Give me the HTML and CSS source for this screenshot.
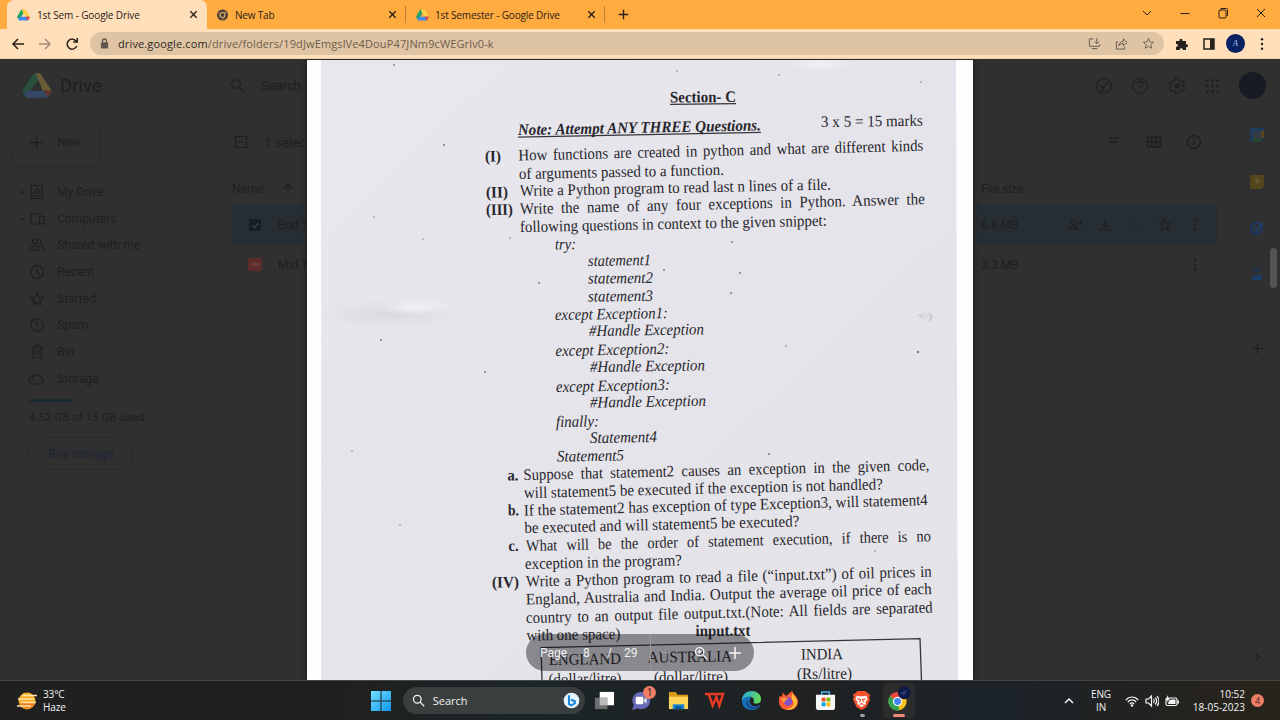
FILE: index.html
```html
<!DOCTYPE html>
<html lang="en">
<head>
<meta charset="utf-8">
<title>1st Sem - Google Drive</title>
<link rel="stylesheet" href="styles.css">
</head>
<body>
<svg class="defs" aria-hidden="true">
  <symbol id="drive" viewBox="0 0 24 22"><path fill="#1fa463" d="M8 1h4l2 3L4 21 0 14z"/><path fill="#ffcf48" d="M8 1h8l8 13h-8z"/><path fill="#4688f4" d="M8 14h16l-4 7H4L2 17z"/><path fill="#ea4335" d="M16 14h8l-4 7z"/></symbol>
  <symbol id="drivebig" viewBox="0 0 24 22"><path fill="#1fa463" d="M9.500 1H12l1.500 5-7 9L2 20l-2-5z"/><path fill="#ffcf48" d="M11 1h3.500L24 15l-7 1z"/><path fill="#4688f4" d="M5 15h14l2 6H4l-3-3z"/><path fill="#ea4335" d="M17 15h7l-3 6z"/><path fill="#303030" d="M12 8.500L7.500 15.500h9z"/></symbol>
  <symbol id="x" viewBox="0 0 10 10"><path class="ln" d="M1.5 1.5l7 7M8.500 1.500l-7 7"/></symbol>
  <symbol id="plus" viewBox="0 0 14 14"><path class="ln" d="M7 1v12M1 7h12"/></symbol>
  <symbol id="star" viewBox="0 0 16 16"><path class="ln" d="M8 1.800l1.800 4.200 4.500.4-3.400 3 1 4.400L8 11.500l-3.900 2.300 1-4.400-3.400-3 4.500-.4z"/></symbol>
  <symbol id="dots" viewBox="0 0 14 14"><g fill="currentColor"><circle cx="7" cy="2.300" r="1.200"/><circle cx="7" cy="7" r="1.200"/><circle cx="7" cy="11.700" r="1.200"/></g></symbol>
  <symbol id="lens" viewBox="0 0 16 16"><circle class="ln" cx="6.500" cy="6.500" r="4.700"/><path class="ln" d="M10 10l5 5"/></symbol>
</svg>

<header class="tabs">
  <div class="tab active"><svg class="fav"><use href="#drive"/></svg><span class="t1">1st Sem - Google Drive</span><svg class="close"><use href="#x"/></svg></div>
  <div class="tab second"><svg class="fav" viewBox="0 0 14 14"><circle cx="7" cy="7" r="6.500" fill="#4b4038"/><circle cx="7" cy="7" r="2.900" fill="#4b4038" stroke="#e9b875" stroke-width="1.200"/><path d="M7 4h6M4.500 8.500l-3-5M9.500 8.500l-3 5" stroke="#c99554" stroke-width=".8"/></svg><span class="t2">New Tab</span><svg class="close"><use href="#x"/></svg></div>
  <div class="tab third"><svg class="fav"><use href="#drive"/></svg><span class="t3">1st Semester - Google Drive</span><svg class="close"><use href="#x"/></svg></div>
  <svg class="newtab"><use href="#plus"/></svg>
  <div class="wins">
    <svg viewBox="0 0 12 12"><path class="ln" d="M2 4l4 4 4-4"/></svg>
    <svg viewBox="0 0 12 12"><path class="ln" d="M1.500 6.500h9"/></svg>
    <svg viewBox="0 0 12 12"><rect class="ln" x="2" y="3" width="7" height="8" rx="1"/><path class="ln" d="M4 3V1.500h5.500q1 0 1 1V9"/></svg>
    <svg viewBox="0 0 12 12"><path class="ln" d="M2 2l8 8M10 2l-8 8"/></svg>
  </div>
</header>

<div class="toolbar">
  <svg class="nav" viewBox="0 0 14 14"><path class="ln" d="M13 7H2M7 2L2 7l5 5"/></svg>
  <svg class="nav faded" viewBox="0 0 14 14"><path class="ln" d="M1 7h11M7 2l5 5-5 5"/></svg>
  <svg class="nav" viewBox="0 0 14 14"><path class="ln" d="M11.800 9A5 5 0 1 1 11.300 4.300M12.300 1v4H8.300"/></svg>
  <div class="omni">
    <svg class="lock" viewBox="0 0 10 12"><path class="ln" d="M2.800 5V3.200a2.200 2.200 0 0 1 4.400 0V5"/><rect x="1" y="4.500" width="8" height="7" rx="1" fill="currentColor"/></svg>
    <span class="url"><b>drive.google.com</b>/drive/folders/19dJwEmgslVe4DouP47JNm9cWEGrlv0-k</span>
    <svg viewBox="0 0 14 14"><path class="ln" d="M6 2H1.500v8h11V8M4 12.500h6M9.500 1v6M7 4.800l2.500 2.500L12 4.800"/></svg>
    <svg viewBox="0 0 14 14"><path class="ln" d="M3 5H1.500v8h9v-2.500M4 9.500C4.500 6 6.500 4.500 9 4.500V2l4 4-4 3.500V7C7 7 5.200 7.500 4 9.500z"/></svg>
    <svg><use href="#star"/></svg>
  </div>
  <svg class="ext" viewBox="0 0 14 14"><path fill="currentColor" d="M1 4h3.500C4 1 8 1 7.500 4H11v3.200c2.800-.5 2.800 3.500 0 3V13H7.800c.3-2.500-3.200-2.500-3 0H1V9.800c2.500 0 2.500-2.800 0-2.800z"/></svg>
  <svg class="ext" viewBox="0 0 14 14"><rect x="2" y="2" width="10" height="10" fill="none" stroke="currentColor" stroke-width="1.500"/><path fill="currentColor" d="M8 2h4v10H8z"/></svg>
  <span class="ava"><i>A</i></span>
  <svg class="ext"><use href="#dots"/></svg>
</div>

<main class="stage">
  <div class="drive">
    <aside class="side">
      <div class="brand"><svg><use href="#drivebig"/></svg><span>Drive</span></div>
      <div class="new"><svg><use href="#plus"/></svg><span>New</span></div>
      <ul class="menu">
        <li><em>▸</em><svg viewBox="0 0 16 16"><path class="ln" d="M2.500 1.500h11v13h-11zM2.500 12h11M8 4L5 9h6z"/></svg>My Drive</li>
        <li><em>▸</em><svg viewBox="0 0 16 16"><path class="ln" d="M0 13h9M2 12V3h12M10.500 5.500h4.700V13h-4.700z"/></svg>Computers</li>
        <li><em></em><svg viewBox="0 0 16 16"><circle class="ln" cx="6" cy="4.500" r="2.500"/><path class="ln" d="M1 13c0-5 10-5 10 0zM10 2c3 0 3 5 0 5M12 9c2 .5 3 2 3 4h-2"/></svg>Shared with me</li>
        <li><em></em><svg viewBox="0 0 16 16"><circle class="ln" cx="8" cy="8" r="6.300"/><path class="ln" d="M8 4v4l3 2"/></svg>Recent</li>
        <li><em></em><svg><use href="#star"/></svg>Starred</li>
        <li><em></em><svg viewBox="0 0 16 16"><circle class="ln" cx="8" cy="8" r="6.300"/><path class="ln" d="M8 4v5M8 10.500V12"/></svg>Spam</li>
        <li><em></em><svg viewBox="0 0 16 16"><path class="ln" d="M2 3h12M4 3v11h8V3M6 1.500h4M6.500 5.500v6M9.500 5.500v6"/></svg>Bin</li>
        <li><em></em><svg viewBox="0 0 16 16"><path class="ln" d="M4 13a3.400 3.400 0 0 1-.3-6.800 4.500 4.500 0 0 1 8.500 1A3 3 0 0 1 12.500 13z"/></svg>Storage</li>
      </ul>
      <div class="bar"><div></div></div>
      <div class="used">4.52 GB of 15 GB used</div>
      <div class="buy">Buy storage</div>
    </aside>
    <section class="files">
      <div class="top">
        <div class="search"><svg><use href="#lens"/></svg><span>Search</span></div>
        <div class="acts">
          <svg viewBox="0 0 18 18"><circle class="ln" cx="9" cy="9" r="7.500"/><path class="ln" d="M5 8l3 3 5-6M6 13h6"/></svg>
          <svg viewBox="0 0 18 18"><circle class="ln" cx="9" cy="9" r="7.500"/><path class="ln" d="M6.500 7c0-3.300 5-3.300 5 0 0 2-2.500 2-2.500 4M9 12.500V14"/></svg>
          <svg viewBox="0 0 18 18"><path class="ln" d="M7.500 1.500h3l.5 2.300 2 1 2.200-.7 1.500 2.600L15 8.500v1l1.700 1.800-1.500 2.600-2.200-.7-2 1-.5 2.300h-3L7 14.200l-2-1-2.200.7-1.500-2.600L3 9.500v-1L1.300 6.700l1.500-2.600 2.200.7 2-1z"/><circle cx="9" cy="9" r="2.500" fill="currentColor"/></svg>
          <svg class="grid" viewBox="0 0 18 18"><path d="M3 3.500h13M3 9h13M3 14.500h13" stroke="currentColor" stroke-width="2.600" stroke-dasharray="2.600 2.600"/></svg>
          <span class="me"></span>
        </div>
      </div>
      <div class="sel"><svg viewBox="0 0 14 14"><path class="ln" d="M1.500 1.500h11v11h-11zM4 7h6"/></svg><span>1 selected</span>
        <div class="view">
          <svg viewBox="0 0 16 16"><path class="ln" d="M2 4h12M4 8h8M7 12h2"/></svg>
          <svg viewBox="0 0 16 16"><path class="ln" d="M1.500 3h13v10h-13zM1.500 8h13M5.800 3v10M10.200 3v10"/></svg>
          <svg viewBox="0 0 16 16"><circle class="ln" cx="8" cy="8" r="6.500"/><path class="ln" d="M8 7v5M8 4v1.500"/></svg>
        </div>
      </div>
      <div class="head"><span>Name</span><svg viewBox="0 0 12 12"><path class="ln" d="M6 11V1.500M2 5.500l4-4 4 4"/></svg><span class="size">File size</span></div>
      <div class="row on"><svg class="kind" viewBox="0 0 14 14"><rect x="1" y="1" width="12" height="12" rx="1" fill="#171e24"/><path d="M4 7l2.500 2.500L10.500 5" fill="none" stroke="#354049" stroke-width="1.400"/></svg><span>End Term</span><span class="size">6.8 MB</span>
        <div class="tools">
          <svg viewBox="0 0 16 16"><circle class="ln" cx="6" cy="5" r="2.500"/><path class="ln" d="M1 13c0-5 10-5 10 0zM14 3.500v5M11.500 6h5"/></svg>
          <svg viewBox="0 0 16 16"><path class="ln" d="M8 2v8M4.500 7L8 10.500 11.500 7M2.500 11v3h11v-3"/></svg>
          <svg class="off" viewBox="0 0 16 16"><path class="ln" d="M8 3L3 12h10z"/></svg>
          <svg><use href="#star"/></svg><svg><use href="#dots"/></svg>
        </div>
      </div>
      <div class="row"><svg class="kind" viewBox="0 0 14 14"><rect width="14" height="13" rx="1" fill="#5c2b2a"/><path d="M3 5h8v3H3z" fill="#6a3b3a"/></svg><span>Mid Term</span><span class="size">3.3 MB</span><div class="tools"><svg><use href="#dots"/></svg></div></div>
    </section>
    <aside class="rail">
      <svg viewBox="0 0 16 16"><path d="M1 1h14v10l-4 4H1z" fill="#1f3a5b"/><path d="M4 4h8v8H4z" fill="#343c46"/><path d="M12 4h3v7h-3z" fill="#5b4820"/><path d="M4 12h8v3H4z" fill="#24462f"/></svg>
      <svg viewBox="0 0 16 16"><path d="M1 1h14v11l-3 3H1z" fill="#54451c"/><circle cx="8" cy="7" r="2.500" fill="#66562f"/></svg>
      <svg viewBox="0 0 16 16"><circle cx="7.500" cy="8.500" r="5.500" fill="none" stroke="#20365f" stroke-width="2.300"/><path d="M5 8l2.500 2.500L14 3" fill="none" stroke="#253e70" stroke-width="2"/></svg>
      <svg class="who" viewBox="0 0 16 16"><circle cx="8" cy="4" r="2.800" fill="#20344c"/><path d="M3 14v-3q0-2 2-2h6q2 0 2 2v3z" fill="#1d3d64"/></svg>
      <hr>
      <svg class="add"><use href="#plus"/></svg>
      <svg class="chev" viewBox="0 0 12 12"><path class="ln" d="M4 2l4 4-4 4"/></svg>
    </aside>
  </div>

  <div class="paper">
    <svg class="scan" viewBox="307 60 666 620">
      <defs>
        <linearGradient id="pg" x1="0" x2="1" y1="0" y2="1"><stop offset="0" stop-color="#e8e7ed"/><stop offset=".5" stop-color="#e5e4ea"/><stop offset="1" stop-color="#e4e3e8"/></linearGradient>
        <radialGradient id="sh"><stop offset="0" stop-color="#cfced5" stop-opacity=".5"/><stop offset="1" stop-color="#cfced5" stop-opacity="0"/></radialGradient>
        <radialGradient id="hi"><stop offset="0" stop-color="#fafaff" stop-opacity=".6"/><stop offset="1" stop-color="#fafaff" stop-opacity="0"/></radialGradient>
      </defs>
      <path d="M321 60H956L958 680H321z" fill="url(#pg)"/>
      <ellipse cx="390" cy="314" rx="70" ry="15" fill="url(#sh)"/>
      <ellipse cx="415" cy="307" rx="40" ry="8" fill="url(#hi)"/>
      <ellipse cx="820" cy="64" rx="34" ry="6" fill="url(#hi)"/>
      <ellipse cx="926" cy="316" rx="12" ry="5" fill="url(#sh)"/>
      <path d="M919 314l4 4M929 313l3 4-3 4" stroke="#b5b4bd" fill="none"/>
      <g fill="#77767f"><circle cx="394" cy="65" r=".9"/><circle cx="444" cy="145" r="1"/><circle cx="510" cy="238" r=".8"/><circle cx="677" cy="71" r=".8"/><circle cx="779" cy="75" r=".8"/><circle cx="539" cy="283" r="1"/><circle cx="664" cy="270" r="1"/><circle cx="740" cy="273" r="1"/><circle cx="731" cy="293" r="1"/><circle cx="732" cy="242" r=".9"/><circle cx="381" cy="340" r="1"/><circle cx="918" cy="352" r="1.200"/><circle cx="769" cy="454" r="1"/><circle cx="786" cy="346" r=".8"/><circle cx="485" cy="372" r=".9"/><circle cx="921" cy="82" r=".8"/><circle cx="423" cy="239" r=".7"/><circle cx="875" cy="551" r=".8"/><circle cx="374" cy="217" r=".7"/><circle cx="400" cy="525" r=".7"/><circle cx="352" cy="451" r=".7"/></g>
      <g class="ink" transform="translate(0 -.4)">
        <g transform="translate(670 103) rotate(-.6)"><text class="b" textLength="66" lengthAdjust="spacingAndGlyphs">Section- C</text><path d="M0 1.800h66"/></g>
        <g transform="translate(518 135.500) rotate(-1.100)"><text class="b i" textLength="243" lengthAdjust="spacingAndGlyphs">Note: Attempt ANY THREE Questions.</text><path d="M0 2h243"/></g>
        <text transform="translate(821 127.500) rotate(-.8)" textLength="102" lengthAdjust="spacingAndGlyphs">3 x 5 = 15 marks</text>
        <text class="b" transform="translate(485 162) rotate(-1)" textLength="16" lengthAdjust="spacingAndGlyphs">(I)</text>
        <text class="w3" transform="translate(518.500 161) rotate(-1.400)" textLength="405" lengthAdjust="spacingAndGlyphs">How functions are created in python and what are different kinds</text>
        <text transform="translate(519 179.500) rotate(-1.200)" textLength="205" lengthAdjust="spacingAndGlyphs">of arguments passed to a function.</text>
        <text class="b" transform="translate(486 198) rotate(-1)" textLength="22" lengthAdjust="spacingAndGlyphs">(II)</text>
        <text transform="translate(520 196.500) rotate(-1.200)" textLength="311" lengthAdjust="spacingAndGlyphs">Write a Python program to read last n lines of a file.</text>
        <text class="b" transform="translate(486 215.500) rotate(-1)" textLength="27" lengthAdjust="spacingAndGlyphs">(III)</text>
        <text class="w4" transform="translate(520 214.500) rotate(-1.400)" textLength="405" lengthAdjust="spacingAndGlyphs">Write the name of any four exceptions in Python. Answer the</text>
        <text transform="translate(520 232.500) rotate(-1.200)" textLength="307" lengthAdjust="spacingAndGlyphs">following questions in context to the given snippet:</text>
        <g class="i">
          <text transform="translate(555 250) rotate(-1)" textLength="21" lengthAdjust="spacingAndGlyphs">try:</text>
          <text transform="translate(588 266.500) rotate(-1)" textLength="63" lengthAdjust="spacingAndGlyphs">statement1</text>
          <text transform="translate(588 284) rotate(-.6)" textLength="65" lengthAdjust="spacingAndGlyphs">statement2</text>
          <text transform="translate(588 302) rotate(-.6)" textLength="65" lengthAdjust="spacingAndGlyphs">statement3</text>
          <text transform="translate(555 320.500) rotate(-1)" textLength="113" lengthAdjust="spacingAndGlyphs">except Exception1:</text>
          <text transform="translate(589 336.500) rotate(-.9)" textLength="115" lengthAdjust="spacingAndGlyphs">#Handle Exception</text>
          <text transform="translate(555.500 356.500) rotate(-1.200)" textLength="114" lengthAdjust="spacingAndGlyphs">except Exception2:</text>
          <text transform="translate(590 372.500) rotate(-.9)" textLength="115" lengthAdjust="spacingAndGlyphs">#Handle Exception</text>
          <text transform="translate(556 392.500) rotate(-1.200)" textLength="114" lengthAdjust="spacingAndGlyphs">except Exception3:</text>
          <text transform="translate(590 408) rotate(-.9)" textLength="116" lengthAdjust="spacingAndGlyphs">#Handle Exception</text>
          <text transform="translate(556 427.500) rotate(-1)" textLength="43" lengthAdjust="spacingAndGlyphs">finally:</text>
          <text transform="translate(590 443.500) rotate(-1)" textLength="67" lengthAdjust="spacingAndGlyphs">Statement4</text>
          <text transform="translate(557 462) rotate(-1)" textLength="67" lengthAdjust="spacingAndGlyphs">Statement5</text>
        </g>
        <g class="b">
          <text transform="translate(507.500 481) rotate(-1)" textLength="11" lengthAdjust="spacingAndGlyphs">a.</text>
          <text transform="translate(508 516) rotate(-1)" textLength="11" lengthAdjust="spacingAndGlyphs">b.</text>
          <text transform="translate(508.500 551.500) rotate(-1)" textLength="10" lengthAdjust="spacingAndGlyphs">c.</text>
          <text transform="translate(492 588) rotate(-1)" textLength="27" lengthAdjust="spacingAndGlyphs">(IV)</text>
          <text transform="translate(695.500 636.500) rotate(-.5)" textLength="55" lengthAdjust="spacingAndGlyphs">input.txt</text>
        </g>
        <text class="w4" transform="translate(523.500 480.500) rotate(-1.400)" textLength="406" lengthAdjust="spacingAndGlyphs">Suppose that statement2 causes an exception in the given code,</text>
        <text transform="translate(524 498.500) rotate(-1.400)" textLength="359" lengthAdjust="spacingAndGlyphs">will statement5 be executed if the exception is not handled?</text>
        <text transform="translate(524 516) rotate(-1.500)" textLength="404" lengthAdjust="spacingAndGlyphs">If the statement2 has exception of type Exception3, will statement4</text>
        <text transform="translate(524.500 533.500) rotate(-1.400)" textLength="275" lengthAdjust="spacingAndGlyphs">be executed and will statement5 be executed?</text>
        <text class="w5" transform="translate(526 551.500) rotate(-1.400)" textLength="405" lengthAdjust="spacingAndGlyphs">What will be the order of statement execution, if there is no</text>
        <text transform="translate(525 569.500) rotate(-1.400)" textLength="157" lengthAdjust="spacingAndGlyphs">exception in the program?</text>
        <text class="w1" transform="translate(526 587) rotate(-1.400)" textLength="406" lengthAdjust="spacingAndGlyphs">Write a Python program to read a file (“input.txt”) of oil prices in</text>
        <text class="w1" transform="translate(526 605) rotate(-1.500)" textLength="406" lengthAdjust="spacingAndGlyphs">England, Australia and India. Output the average oil price of each</text>
        <text class="w2" transform="translate(526 623.500) rotate(-1.500)" textLength="407" lengthAdjust="spacingAndGlyphs">country to an output file output.txt.(Note: All fields are separated</text>
        <text transform="translate(526.500 641) rotate(-1)" textLength="94" lengthAdjust="spacingAndGlyphs">with one space)</text>
        <path d="M542 681L541 648L920 639L921.500 681"/>
        <text transform="translate(549 665.500) rotate(-1)" textLength="72" lengthAdjust="spacingAndGlyphs">ENGLAND</text>
        <text transform="translate(648 663) rotate(-.9)" textLength="84" lengthAdjust="spacingAndGlyphs">AUSTRALIA</text>
        <text transform="translate(801 660) rotate(-.6)" textLength="42" lengthAdjust="spacingAndGlyphs">INDIA</text>
        <text transform="translate(548.500 685) rotate(-1)" textLength="73" lengthAdjust="spacingAndGlyphs">(dollar/litre)</text>
        <text transform="translate(654 683) rotate(-.8)" textLength="74" lengthAdjust="spacingAndGlyphs">(dollar/litre)</text>
        <text transform="translate(797 679.500) rotate(-.6)" textLength="55" lengthAdjust="spacingAndGlyphs">(Rs/litre)</text>
      </g>
    </svg>
  </div>
  <div class="pager"><span class="p1">Page</span><span class="p2">8</span><span class="p3">/</span><span class="p4">29</span><div class="zoomer"><i class="minus"></i><svg viewBox="0 0 16 16"><use href="#lens"/><path class="ln" d="M4.300 6.500h4.400M6.500 4.300v4.400"/></svg><svg><use href="#plus"/></svg></div></div>
  <div class="thumb"></div>
</main>

<footer class="task">
  <div class="weather"><svg viewBox="0 0 20 18"><circle cx="10" cy="9" r="8.500" fill="#f7ae25"/><path d="M2 11h16a8.500 8.500 0 0 1-16 0" fill="#ec7b1c"/><path d="M5 3.500h15M1 7h16M4 10.500h15M0 14h14" stroke="#ffe6b0" stroke-width="1.300"/></svg><div>33°C<br>Haze</div></div>
  <div class="apps">
    <svg class="win" viewBox="0 0 20 20"><defs><linearGradient id="wg" x2="1" y2="1"><stop stop-color="#75e2ff"/><stop offset="1" stop-color="#0c94f0"/></linearGradient></defs><path fill="url(#wg)" d="M0 0h9.500v9.500H0zM10.500 0H20v9.500h-9.500zM0 10.500h9.500V20H0zM10.500 10.500H20V20h-9.500z"/></svg>
    <div class="find"><svg><use href="#lens"/></svg><span>Search</span><svg class="bing" viewBox="0 0 18 18"><circle cx="9" cy="9" r="8.300" fill="#e6f4ff"/><path d="M6.300 3.500v9.300l2.500 1.400 3.800-2.300V9.800L8.300 8" fill="none" stroke="#1683dd" stroke-width="2.100"/></svg></div>
    <svg viewBox="0 0 22 22"><path fill="#fff" d="M6 2h15v14H6z"/><path fill="#777" fill-opacity=".9" d="M1 8h13v12H1z"/><path fill="#bbb" d="M6 8h8v8H6z"/></svg>
    <div class="chat"><svg viewBox="0 0 22 22"><path fill="#6668ba" d="M11 2a9 9 0 1 1-4 17L1 21l2-5A9 9 0 0 1 11 2z"/><rect x="5" y="7" width="8" height="8" rx="1.500" fill="#fff"/><path fill="#ddd" d="M13.500 10l3-2.500v7l-3-2.500z"/></svg><b>1</b></div>
    <svg viewBox="0 0 22 22"><path fill="#d99a17" d="M1 2h7l2 3h11v14H1z"/><path fill="#ffd45a" d="M1 7h20v13H1z"/><path fill="#1583cf" d="M5 15h12v5H5z"/><path fill="#0b569b" d="M8 17h6v3H8z"/></svg>
    <svg viewBox="0 0 22 22"><path fill="none" stroke="#e63a25" stroke-width="2.600" d="M1 4.300h4l4 12 4-9 3 9 4-12H6.500"/></svg>
    <svg viewBox="0 0 22 22"><defs><linearGradient id="eg" x2="1" y2=".3"><stop stop-color="#24a8e4"/><stop offset="1" stop-color="#62d85b"/></linearGradient></defs><path fill="#1473bc" d="M1 11C1 5 8 5 11 8c-3 1-3 8 3 9 3 .5 5-1 6.500-2C18 20 15 21 11 21 5 21 1 17 1 11z"/><path fill="url(#eg)" d="M1 11C1-2 21-2 21 10c0 5-7 5-8 3 2-4-2-7-6-6-3 .5-5 2-6 4z"/><path fill="#1b4f91" d="M8 10c-2 5 3 10 12 6-4 7-15 4-15-2 0-2 1-4 3-4z"/></svg>
    <svg viewBox="0 0 22 22"><path fill="#ff5c34" d="M2 6l2 1 1-4 3 3c3 0 4-4 7-5 0 3 6 6 6 11 0 12-20 12-20 0 0-2 0-4 1-6z"/><path fill="#ffbf36" d="M15 3c1 4 6 5 5 11-2 6-7 8-12 6 10-1 10-7 6-11z"/><circle cx="10.500" cy="12" r="4.500" fill="#8650c9"/><path fill="#ff963b" d="M3 9c3-2 6-1 8 1-3 0-4 2-5 4z"/></svg>
    <svg viewBox="0 0 22 22"><path d="M7 6V2h8v4" fill="none" stroke="#48b6ee" stroke-width="1.500"/><path fill="#f5f6f8" d="M1 5h20v13q0 3-3 3H4q-3 0-3-3z"/><path fill="#f25022" d="M7 8h4v4H7z"/><path fill="#7fba00" d="M12 8h4v4h-4z"/><path fill="#00a4ef" d="M7 13h4v4H7z"/><path fill="#ffb900" d="M12 13h4v4h-4z"/></svg>
    <div class="app"><svg viewBox="0 0 22 22"><path fill="#f4512c" d="M7 1h8l2 2 3 2-1 3 1 2-4 8-5 3-5-3L2 10l1-2-1-3 3-2z"/><path fill="#fff" d="M6 6l3 .5h4L16 6l1.500 3.500L15 12.500l.5 2L11 18l-4.500-3.500.5-2-2.500-3z"/><path d="M6.500 9l3.500 1-1 3M15.500 9L12 10l1 3M9 15.500l2-1.500 2 1.500" fill="none" stroke="#f4512c" stroke-width="1.200"/></svg><i class="gray"></i></div>
    <div class="app lit"><svg viewBox="0 0 22 22"><circle cx="10" cy="12" r="9.500" fill="#fbc51d"/><path fill="#e94436" d="M10 12L2 6.500C7-1 17 2 19 8h-9z"/><path fill="#32a451" d="M2 6.500L10 12l2 9.500C1 22-2 12 2 6.500z"/><circle cx="10" cy="12" r="4.800" fill="#fff"/><circle cx="10" cy="12" r="3.600" fill="#4285f4"/><circle cx="17" cy="3" r="6.600" fill="#0c1b4b"/><path d="M14 4l5-3M16 5l2-2" stroke="#7182b8" stroke-width=".7"/></svg><i></i></div>
  </div>
  <div class="tray">
    <svg class="up" viewBox="0 0 12 12"><path class="ln" d="M2 8l4-4 4 4"/></svg>
    <div class="lang">ENG<br>IN</div>
    <svg viewBox="0 0 14 14"><path class="ln" d="M.8 6c3.500-4 9-4 12.400 0M2.800 8c2.500-2.800 6-2.800 8.400 0M4.800 10c1.500-1.500 3-1.500 4.400 0"/><circle cx="7" cy="11.500" r="1.200" fill="currentColor"/></svg>
    <svg viewBox="0 0 14 14"><path class="ln" d="M1 5h2.500L6.500 2v10L3.500 9H1zM8.500 5q1.500 2 0 4M10.200 3.500q3 3.500 0 7M12 2q4 5 0 10"/></svg>
    <svg viewBox="0 0 14 14"><rect class="ln" x="1" y="4" width="11" height="7.500" rx="1.500"/><path fill="currentColor" d="M4 6.500L6 5.500h4.500V10H3zM12.500 6.500H14v3h-1.500zM3 1L.5 6h2L2 8.500 5 4H3z"/></svg>
    <div class="clock">10:52<br>18-05-2023</div>
    <b class="note">4</b>
  </div>
</footer>
</body>
</html>
```
FILE: styles.css
```css
* { box-sizing: border-box; }
body { margin: 0; width: 1280px; height: 720px; overflow: hidden; display: flex; flex-direction: column; font-family: "Open Sans", "Noto Sans", sans-serif; font-size: 10px; color: #2b2118; }
svg { flex: none; display: block; }
.defs { position: absolute; width: 0; height: 0; }
.ln { fill: none; stroke: currentColor; stroke-width: var(--sw, 1.2); }

.tabs { height: 29px; background: #ffab40; display: flex; align-items: center; flex: none; }
.tab { display: flex; align-items: center; height: 29px; white-space: nowrap; }
.tab .fav { width: 13px; height: 12px; margin-right: 6px; }
.tab .close { width: 9px; height: 9px; margin-left: auto; --sw: 1.5; }
.active { background: #ffdfba; width: 200px; margin-left: 7px; border-radius: 7px 7px 0 0; padding: 0 9px 0 10px; }
.active .fav { margin-right: 7px; }
.second { width: 199px; padding: 0 8px 0 9px; height: 17px; border-right: 1px solid #bb8038; }
.third { width: 199px; padding: 0 8px 0 10px; height: 17px; border-right: 1px solid #bb8038; }
.t1 { letter-spacing: -.12px; } .t2 { letter-spacing: -.18px; } .t3 { letter-spacing: -.16px; }
.newtab { width: 11px; height: 11px; margin-left: 13px; --sw: 1.8; }
.wins { margin-left: auto; display: flex; gap: 26px; padding: 0 13px 3px 0; }
.wins svg { width: 12px; height: 12px; --sw: 1; }

.toolbar { height: 30px; flex: none; background: #ffdfba; display: flex; align-items: center; padding-left: 11px; border-bottom: 1px solid #f2d2ab; }
.nav { width: 14px; height: 14px; margin-right: 13px; --sw: 1.5; }
.faded { color: #a58f78; }
.omni { width: 1074px; height: 23px; border-radius: 12px; background: #dfc4a3; display: flex; align-items: center; padding: 0 9px 0 10px; color: #5e564f; margin-left: -2px; }
.omni svg { width: 13px; height: 13px; margin-left: 14px; --sw: 1; }
.omni .lock { width: 9px; height: 11px; margin: 0 9px 0 0; --sw: 1.4; }
.url { margin-right: auto; font-size: 11px; letter-spacing: .13px; color: #6d5e4d; }
.url b { font-weight: 400; color: #2e2923; }
.ext { width: 14px; height: 14px; margin-left: 11px; color: #25211d; }
.ext + .ext { margin-left: 13px; }
.ava { width: 19px; height: 19px; border-radius: 50%; background: #092163; color: #bac4ed; text-align: center; margin-left: 10px; font: 8px/19px "Liberation Serif", serif; }
.ava + .ext { margin-left: 10px; }

.stage { height: 621px; position: relative; overflow: hidden; background: #303030; color: #1e1f20; flex: none; }
.drive { display: flex; height: 621px; font-family: Roboto, "Open Sans", sans-serif; font-size: 12px; }
.side { width: 230px; padding-left: 12px; flex: none; }
.brand { display: flex; align-items: center; height: 53px; gap: 8px; font-size: 18.5px; padding-left: 10px; }
.brand svg { width: 30px; height: 27px; opacity: .27; }
.new { width: 87px; height: 48px; margin-top: 6px; display: flex; align-items: center; gap: 13px; padding-left: 17px; border-radius: 13px; box-shadow: 0 1px 3px #292929; }
.new svg { width: 15px; height: 15px; }
.menu { list-style: none; margin: 12.500px 0 0; padding: 0; }
.menu li { height: 26.700px; display: flex; align-items: center; letter-spacing: .03px; }
.menu em { width: 17px; padding-left: 9px; font: 7px "DejaVu Sans", sans-serif; }
.menu svg { width: 16px; height: 16px; margin-right: 12px; }
.bar { height: 3px; width: 146px; margin: 7px 0 0 17px; background: #2d2f31; }
.bar div { width: 43px; height: 3px; background: #1c2a34; }
.used { margin: 9px 0 0 17px; font-size: 11.3px; letter-spacing: .12px; line-height: 14px; }
.buy { width: 106px; height: 33px; margin: 12px 0 0 16px; border: 1px solid #292a2b; border-radius: 17px; color: #1c2534; text-align: center; line-height: 32px; letter-spacing: .25px; }
.files { width: 988px; flex: none; }
.top { height: 53px; display: flex; justify-content: space-between; align-items: center; }
.search { height: 40px; width: 700px; margin-left: -14px; border-radius: 20px; background: #2f3031; display: flex; align-items: center; gap: 16px; padding-left: 14px; font-size: 13px; }
.search svg { width: 15px; height: 15px; }
.acts { display: flex; align-items: center; gap: 18.500px; margin-right: -48px; }
.acts svg { width: 18px; height: 18px; }
.acts .grid { margin-left: -1.500px; }
.me { width: 27px; height: 27px; border-radius: 50%; background: #171b23; }
.sel { display: flex; align-items: center; height: 60px; padding-left: 4px; gap: 16px; font-size: 13.5px; }
.sel > svg { width: 14px; height: 14px; }
.view { margin-left: auto; display: flex; gap: 24px; padding-right: 16px; }
.view svg { width: 16px; height: 16px; --sw: 1.4; }
.head { height: 33px; display: flex; align-items: center; padding-left: 2px; }
.head svg { width: 12px; height: 12px; margin-left: 18px; }
.head .size { margin-left: auto; width: 237px; letter-spacing: -.1px; }
.row { height: 40px; display: flex; align-items: center; padding-left: 18px; }
.row.on { background: #272e33; margin-left: 1px; padding-left: 17px; }
.kind { width: 14px; height: 14px; margin-right: 16px; }
.row .size { margin-left: auto; width: 85px; }
.tools { width: 152px; display: flex; justify-content: flex-end; gap: 16px; padding-right: 16px; }
.tools svg { width: 14px; height: 14px; }
.off { opacity: .3; }
.rail { width: 62px; display: flex; flex-direction: column; align-items: center; padding: 68px 0 0 16px; gap: 30.600px; flex: none; }
.rail svg { width: 16px; height: 16px; }
.rail .who { margin-top: -1px; overflow: visible; }
.rail hr { width: 10px; flex: none; border: 0; border-top: 1px solid #2d2d2d; margin: 0; }
.rail .add { width: 13px; height: 13px; margin-top: -2px; }
.rail .chev { width: 12px; height: 12px; margin-top: 265px; }
.paper { position: absolute; left: 307px; top: 1px; width: 666px; height: 620px; background: #fefefe; box-shadow: 0 0 6px #1d1d1d; }
.scan { width: 666px; height: 620px; }
.ink { font: 16px "Liberation Serif", "Times New Roman", serif; fill: #28272d; }
.ink path { stroke: #36343a; stroke-width: 1.300; fill: none; }
.b { font-weight: 700; }
.i { font-style: italic; }
.w1 { word-spacing: 1px; } .w2 { word-spacing: 2px; } .w3 { word-spacing: 2px; } .w4 { word-spacing: 4px; } .w5 { word-spacing: 6px; }
.pager { position: absolute; left: 526px; top: 575px; width: 228px; height: 37px; border-radius: 19px; background: rgba(10,10,14,.42); color: #f2f2f4; display: flex; align-items: center; font: 12px Roboto, sans-serif; }
.pager > * { flex: none; }
.p1 { width: 57px; padding-left: 14px; } .p2 { width: 24px; } .p3 { width: 17px; } .p4 { width: 26px; }
.zoomer { display: flex; align-items: center; border-left: 1px solid #97979a; height: 36px; }
.minus { width: 9px; height: 1px; background: #a2a2a6; margin: 0 24px 0 10px; }
.zoomer svg { width: 14px; height: 14px; --sw: 1.6; margin-right: 20px; }
.zoomer svg:last-child { margin-right: 0; }
.thumb { position: absolute; right: 3px; top: 189px; width: 7px; height: 40px; border-radius: 4px; background: #545454; }

.task { height: 40px; flex: none; border-top: 1px solid #444; background: linear-gradient(90deg, #202020 0, #202020 345px, #1b2528 520px, #202122 800px, #1b2329 1000px, #222 1120px, #29241a 1280px); display: flex; align-items: center; color: #f3f3f3; line-height: 13px; }
.weather { width: 371px; display: flex; gap: 6px; padding-left: 17px; align-items: center; }
.weather svg { width: 20px; height: 18px; }
.weather div { letter-spacing: -.15px; }
.apps { display: flex; align-items: center; gap: 14.700px; flex: none; }
.apps > svg, .app svg, .chat svg { width: 21px; height: 21px; margin-right: 1px; }
.apps > .win { width: 20px; height: 20px; margin-right: -3px; }
.find { width: 182px; height: 27px; border-radius: 14px; background: #3a3e3f; display: flex; align-items: center; padding: 0 5px 0 9px; font-size: 11px; gap: 8px; margin-right: -5px; }
.find svg { width: 13px; height: 13px; --sw: 1.6; }
.find .bing { width: 17px; height: 17px; margin-left: auto; }
.chat { position: relative; }
.chat b { position: absolute; left: 12px; top: -4px; width: 13px; height: 13px; border-radius: 50%; background: #f17d68; color: #271d1b; font: 10px/13px "Open Sans", sans-serif; text-align: center; }
.app { position: relative; }
.app i { position: absolute; left: 5px; bottom: -6px; width: 12px; height: 3px; border-radius: 2px; background: #f28875; }
.app i.gray { width: 5px; left: 9px; background: #a0a0a0; }
.lit::before { content: ""; position: absolute; left: -5px; top: -7px; width: 32px; height: 35px; border-radius: 4px; background: #2c2c2c; }
.lit svg { position: relative; overflow: visible; }
.tray { margin-left: auto; display: flex; align-items: center; padding-right: 16px; gap: 6px; }
.tray svg { width: 14px; height: 14px; }
.tray .up { width: 12px; height: 12px; margin-right: 8px; --sw: 1.5; }
.lang { text-align: center; width: 24px; margin-right: 6px; letter-spacing: -.15px; }
.clock { width: 60px; display: flex; justify-content: flex-end; text-align: right; white-space: nowrap; }
.note { width: 13px; height: 13px; border-radius: 50%; background: #ee7f68; color: #45251e; font: 9px/13px "Open Sans", sans-serif; text-align: center; }
```
